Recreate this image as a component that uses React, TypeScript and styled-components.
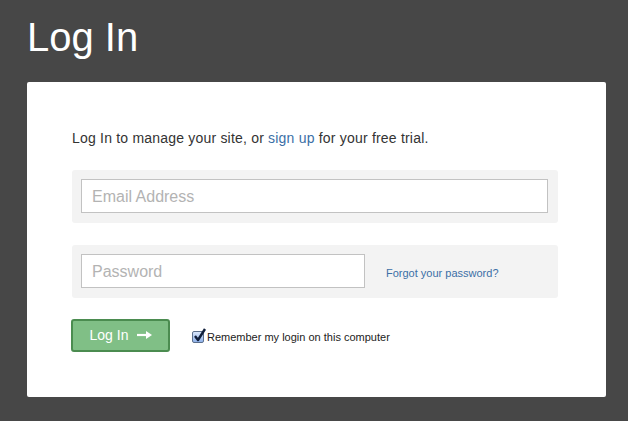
import React from "react";
import styled, { createGlobalStyle } from "styled-components";

const Global = createGlobalStyle`
  html, body { margin: 0; padding: 0; }
  body {
    background: #474747;
    font-family: "Liberation Sans", Arial, sans-serif;
    width: 628px;
    height: 421px;
    overflow: hidden;
  }
`;

const Page = styled.div`
  display: flex;
  flex-direction: column;
  padding: 14px 22px 0 27px;
`;

const Title = styled.h1`
  margin: 0 0 21px 0;
  font-size: 40px;
  line-height: 47px;
  font-weight: normal;
  color: #ffffff;
`;

const Card = styled.div`
  width: 579px;
  height: 315px;
  box-sizing: border-box;
  background: #ffffff;
  border-radius: 2px;
  padding: 48px 48px 0 45px;
  display: flex;
  flex-direction: column;
`;

const Intro = styled.p`
  margin: 0 0 24px;
  font-size: 14px;
  line-height: 16px;
  letter-spacing: 0.2px;
  color: #333333;
`;

const Link = styled.a`
  color: #3b6fa6;
  text-decoration: none;
`;

const Group = styled.div<{ $mb: number }>`
  display: flex;
  align-items: center;
  background: #f3f3f3;
  border-radius: 3px;
  padding: 9px 10px 10px 9px;
  margin-bottom: ${(p) => p.$mb}px;
`;

const Input = styled.input<{ $w: number }>`
  box-sizing: border-box;
  width: ${(p) => p.$w}px;
  height: 34px;
  border: 1px solid #c2c2c2;
  background: #ffffff;
  padding: 2px 10px 0;
  font-family: "Liberation Sans", Arial, sans-serif;
  font-size: 16px;
  color: #333;
  outline: none;
  &::placeholder { color: #b3b3b3; }
`;

const Forgot = styled.a`
  margin-left: 21px;
  margin-top: 3px;
  font-size: 11px;
  color: #3b6fa6;
  text-decoration: none;
`;

const Actions = styled.div`
  display: flex;
  align-items: center;
  gap: 22px;
  margin-left: -1px;
`;

const Button = styled.button`
  box-sizing: border-box;
  width: 99px;
  height: 33px;
  background: #80bf86;
  border: 2px solid #4b8c50;
  border-radius: 3px;
  color: #ffffff;
  font-family: "Liberation Sans", Arial, sans-serif;
  font-size: 14px;
  display: flex;
  align-items: center;
  justify-content: center;
  gap: 8px;
  padding: 0 0 1px 2px;
  cursor: pointer;
`;

const Remember = styled.label`
  display: flex;
  align-items: center;
  gap: 3px;
  font-size: 11px;
  color: #222222;
  margin-top: 2px;
`;

const Box = styled.span`
  position: relative;
  width: 12px;
  height: 12px;
  box-sizing: border-box;
  border: 1px solid #5b6f8c;
  border-radius: 2px;
  background: linear-gradient(#d9e6fa, #8fb2ea);
  display: inline-block;
`;

const Check = styled.svg`
  position: absolute;
  left: 0px;
  top: -4px;
`;

export default function App() {
  return (
    <>
      <Global />
      <Page>
        <Title>Log In</Title>
        <Card>
          <Intro>
            Log In to manage your site, or <Link href="#">sign up</Link> for your free trial.
          </Intro>
          <Group $mb={22}>
            <Input $w={467} type="email" placeholder="Email Address" />
          </Group>
          <Group $mb={21}>
            <Input $w={284} type="password" placeholder="Password" />
            <Forgot href="#">Forgot your password?</Forgot>
          </Group>
          <Actions>
            <Button type="button">
              Log In
              <svg width="17" height="10" viewBox="0 0 17 10">
                <path d="M1 5 H12" stroke="#fff" strokeWidth="2.2" />
                <path d="M10 1 L16 5 L10 9 Z" fill="#fff" />
              </svg>
            </Button>
            <Remember>
              <Box>
                <Check width="14" height="15" viewBox="0 0 14 15">
                  <path d="M2 8 L5 12 L12 1" stroke="#0f1e3a" strokeWidth="2.4" fill="none" strokeLinejoin="round" />
                </Check>
              </Box>
              Remember my login on this computer
            </Remember>
          </Actions>
        </Card>
      </Page>
    </>
  );
}
